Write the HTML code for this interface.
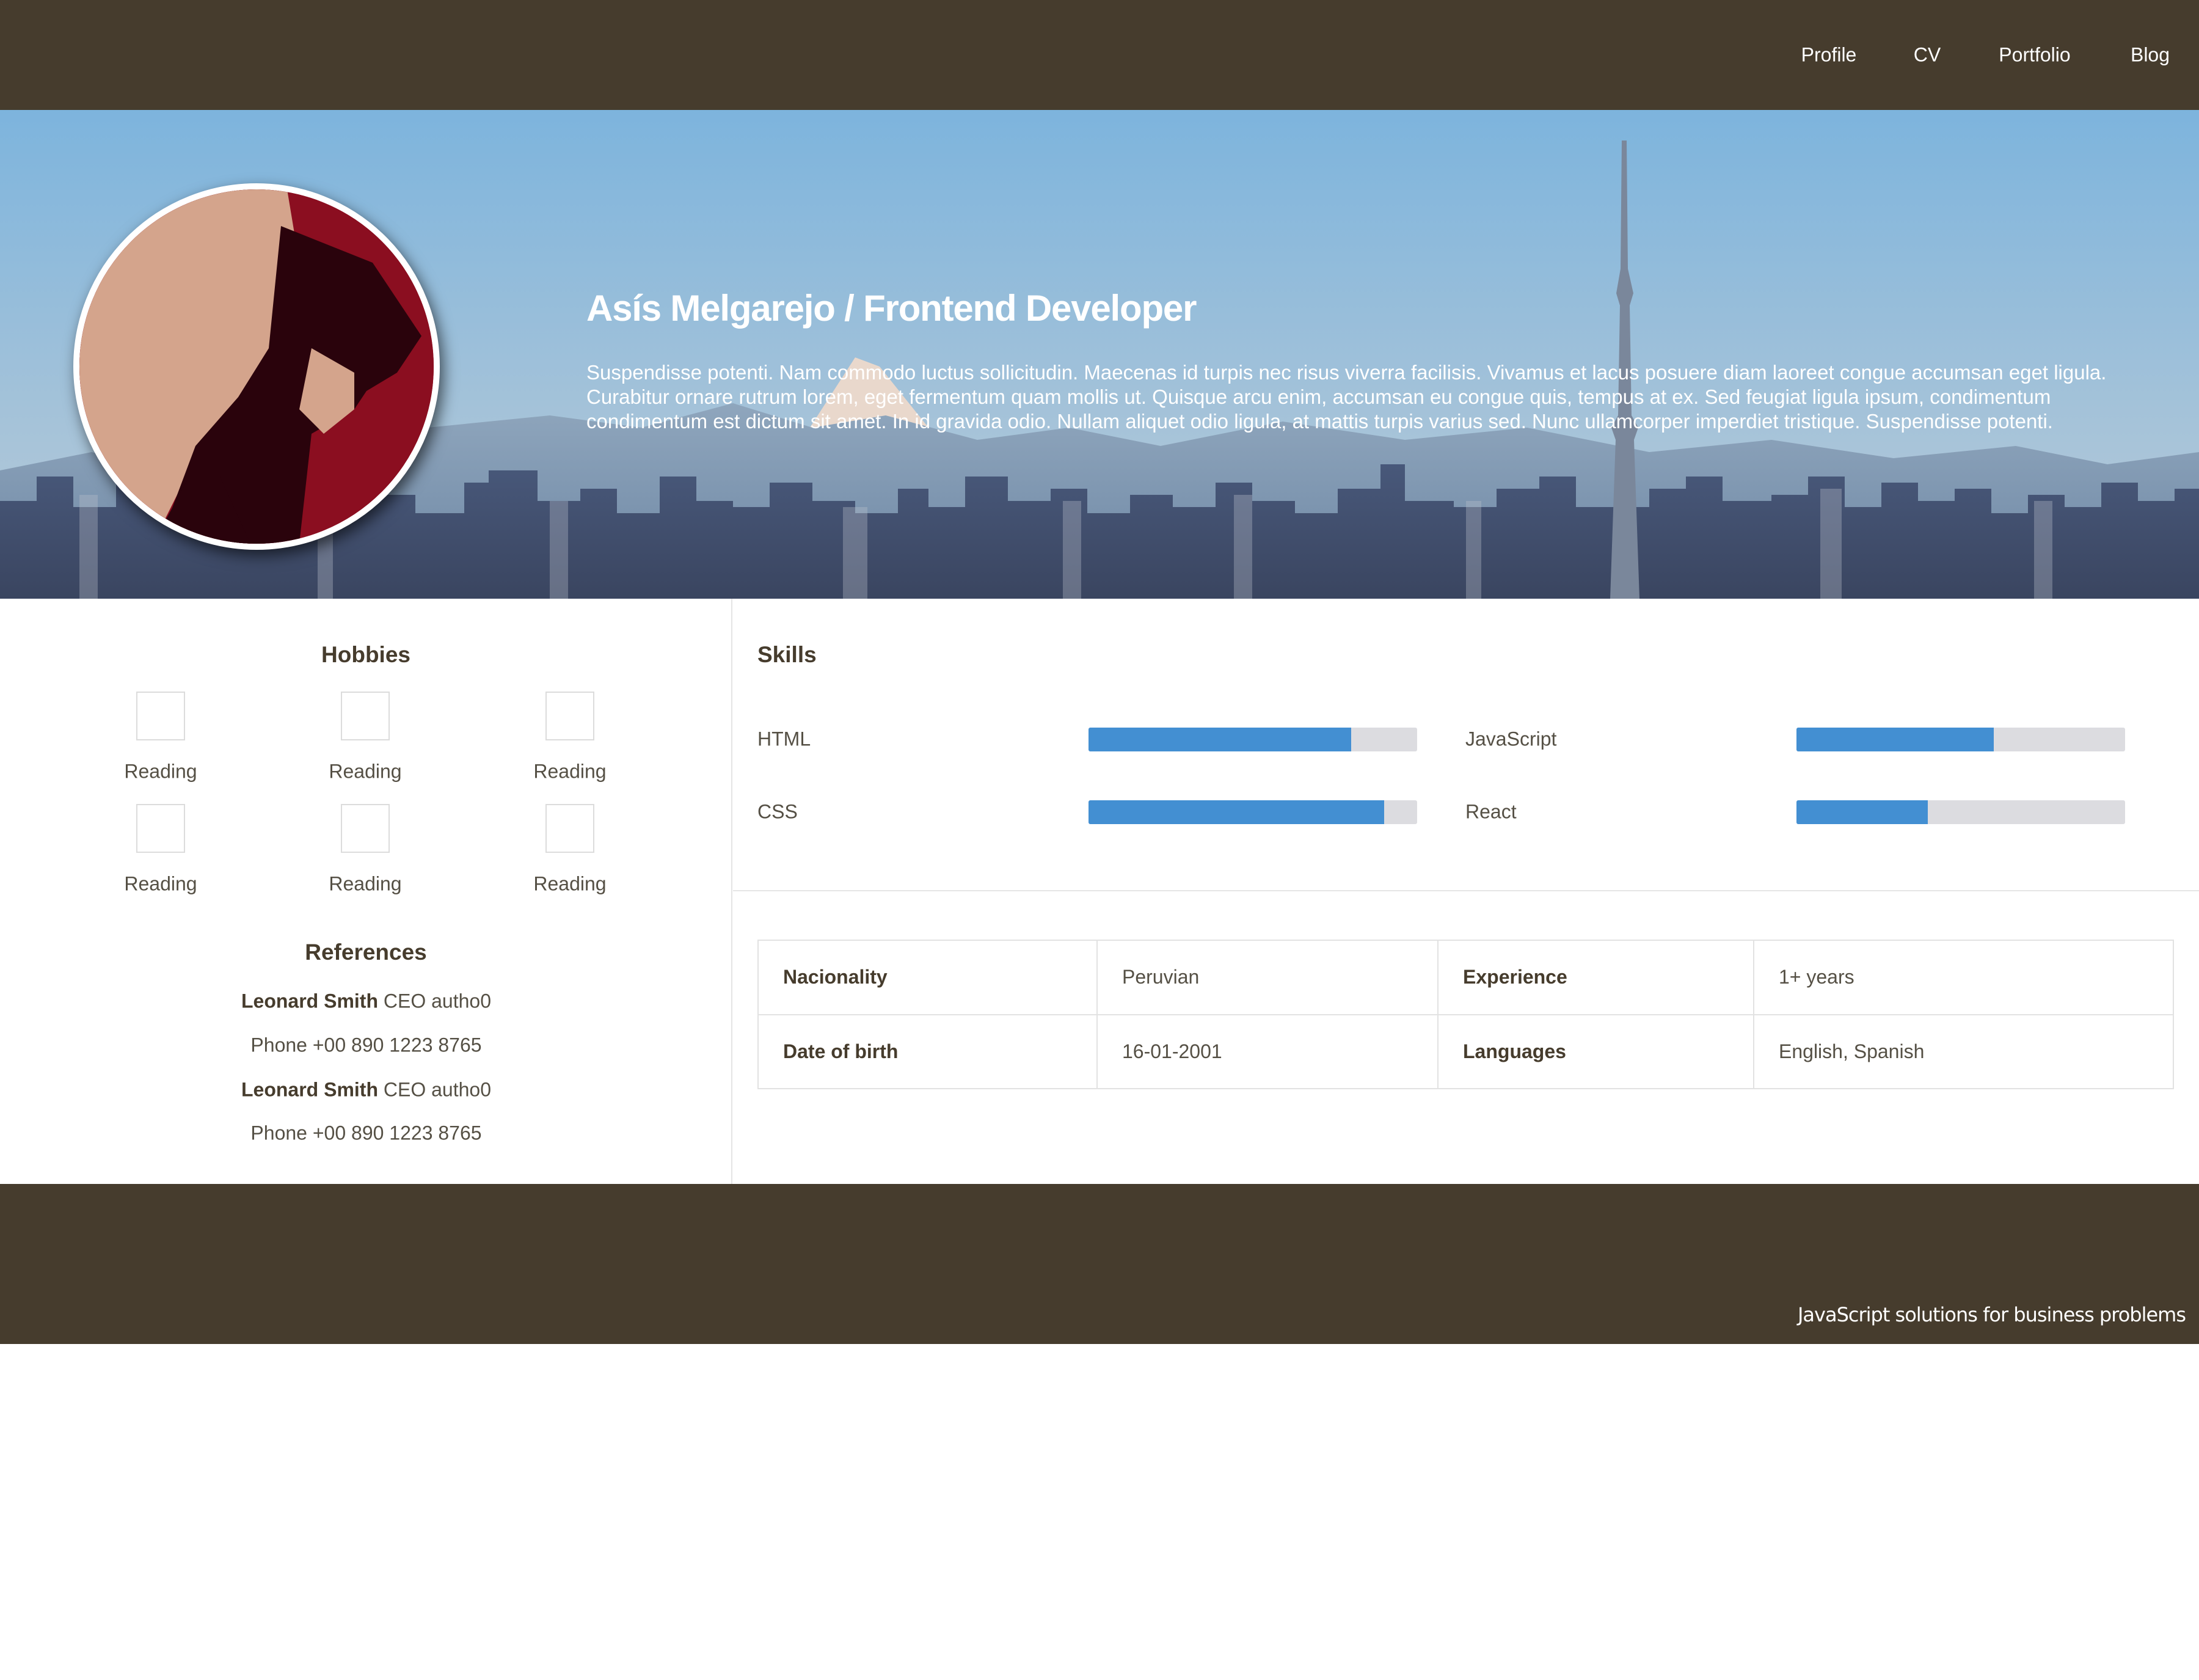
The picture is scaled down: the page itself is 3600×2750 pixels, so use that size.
<!DOCTYPE html>
<html><head><meta charset="utf-8"><style>
*{margin:0;padding:0;box-sizing:border-box}
html,body{width:3600px;height:2750px;background:#fff;overflow:hidden;font-family:"Liberation Sans",sans-serif;color:#463c2d}
.hdr{position:absolute;left:0;top:0;width:3600px;height:180px;background:#463c2d}
.nav{position:absolute;top:90px;transform:translate(-50%,-50%);color:#fff;font-size:32px;white-space:nowrap}
.hero{position:absolute;left:0;top:180px;width:3600px;height:800px;overflow:hidden}
.av{position:absolute;left:120px;top:120px;width:600px;height:600px;border-radius:50%;border:10px solid #fff;overflow:hidden;box-shadow:6px 10px 24px rgba(0,0,0,.6);background:#8b0e20}
h1{position:absolute;left:960px;top:290px;color:#fff;font-size:60px;font-weight:bold;letter-spacing:-1.2px}
.pp{position:absolute;left:960px;top:410px;width:2510px;color:#fff;font-size:33px;line-height:40px}
.left{position:absolute;left:0;top:980px;width:1199px;height:958px;border-right:2px solid #e5e5e5}
.h2{position:absolute;font-size:37px;font-weight:bold;transform:translate(-50%,-50%);white-space:nowrap}
.box{position:absolute;width:80px;height:80px;border:2px solid #dcdcdc}
.lab{position:absolute;font-size:32px;transform:translate(-50%,-50%);white-space:nowrap;color:#555045}
.ref{position:absolute;left:0;width:1199px;text-align:center;font-size:32px;transform:translateY(-50%);color:#555045}
.ref b{color:#463c2d}
.sk{position:absolute;font-size:32px;transform:translateY(-50%);color:#555045}
.bar{position:absolute;width:538px;height:39px;background:#dcdce0;border-radius:3px;overflow:hidden}
.bar i{display:block;height:100%;background:#438fd2}
.div{position:absolute;left:1200px;top:1457px;width:2400px;height:2px;background:#e5e5e5}
table{position:absolute;left:1240px;top:1538px;width:2319px;height:245px;border-collapse:collapse}
td{border:2px solid #e2e2e2;padding-left:40px;font-size:32px;color:#555045;vertical-align:middle}
td b{color:#463c2d}
.ftr{position:absolute;left:0;top:1938px;width:3600px;height:262px;background:#463c2d}
.tag{position:absolute;right:22px;top:2133px;color:#fff;font-size:32px;font-family:"Comic Sans MS","DejaVu Sans",cursive;letter-spacing:-1px}
</style></head><body>
<div class="hdr"></div>
<div class="nav" style="left:2994px">Profile</div>
<div class="nav" style="left:3155px">CV</div>
<div class="nav" style="left:3331px">Portfolio</div>
<div class="nav" style="left:3520px">Blog</div>

<div class="hero">
<svg width="3600" height="800" viewBox="0 0 3600 800">
<defs>
<linearGradient id="sky" x1="0" y1="0" x2="0" y2="1"><stop offset="0" stop-color="#7db4dd"/><stop offset="0.6" stop-color="#a3c2d9"/><stop offset="1" stop-color="#b9cbd8"/></linearGradient>
<linearGradient id="mt" x1="0" y1="0" x2="0" y2="1"><stop offset="0" stop-color="#8fa6bd"/><stop offset="1" stop-color="#6d86a3"/></linearGradient>
<linearGradient id="ct" x1="0" y1="0" x2="0" y2="1"><stop offset="0" stop-color="#48587a"/><stop offset="1" stop-color="#3a4560"/></linearGradient>
</defs>
<rect width="3600" height="800" fill="url(#sky)"/>
<path d="M1300 560 L1400 405 L1440 420 L1520 520 L1580 560Z" fill="#e9d8cc"/>
<path d="M0 590 L150 560 L300 600 L500 540 L700 520 L900 500 L1050 520 L1200 480 L1330 520 L1450 500 L1600 540 L1750 520 L1900 550 L2100 510 L2300 540 L2500 520 L2700 560 L2900 540 L3100 570 L3300 550 L3450 580 L3600 560 L3600 800 L0 800Z" fill="url(#mt)"/>
<path d="M0 640 H60 V600 H120 V650 H190 V610 H240 V580 H280 V630 H340 V660 H410 V615 H470 V640 H540 V600 H600 V630 H680 V660 H760 V610 H800 V590 H880 V640 H950 V620 H1010 V660 H1080 V600 H1140 V640 H1200 V650 H1260 V610 H1330 V640 H1400 V660 H1470 V620 H1520 V650 H1580 V600 H1650 V640 H1720 V620 H1780 V660 H1850 V630 H1920 V650 H1990 V610 H2050 V640 H2120 V660 H2190 V620 H2260 V580 H2300 V640 H2380 V650 H2450 V620 H2520 V600 H2580 V650 H2700 V620 H2760 V600 H2820 V640 H2900 V630 H2960 V600 H3020 V650 H3080 V610 H3140 V640 H3200 V620 H3260 V660 H3320 V630 H3380 V650 H3440 V610 H3500 V640 H3560 V620 H3600 V800 H0Z" fill="url(#ct)"/>
<g fill="#b9c0cc" opacity=".35">
<rect x="130" y="630" width="30" height="170"/><rect x="520" y="620" width="25" height="180"/><rect x="900" y="640" width="30" height="160"/><rect x="1380" y="650" width="40" height="150"/><rect x="1740" y="640" width="30" height="160"/><rect x="2020" y="630" width="30" height="170"/><rect x="2400" y="640" width="25" height="160"/><rect x="2980" y="620" width="35" height="180"/><rect x="3330" y="640" width="30" height="160"/>
</g>
<path d="M2655 50 L2663 50 L2665 260 L2674 300 L2668 320 L2671 500 L2682 520 L2675 540 L2684 800 L2636 800 L2645 540 L2638 520 L2649 500 L2652 320 L2646 300 L2653 260Z" fill="#7a879b"/>
</svg>
<div class="av">
<svg width="580" height="580" viewBox="0 0 580 580">
<rect width="580" height="580" fill="#8b0e20"/>
<path d="M0 0 L340 0 L360 120 L330 300 L270 360 L200 420 L120 580 L0 580Z" fill="#d4a48c"/>
<path d="M330 60 L480 120 L560 240 L520 300 L470 330 L450 360 L380 400 L360 580 L130 580 L190 420 L260 340 L310 260Z" fill="#2a030c"/>
<path d="M380 260 L450 300 L450 360 L400 400 L360 360Z" fill="#d4a48c"/>
<path d="M120 580 L180 470 L230 470 L280 580Z" fill="#2a030c"/>
</svg>
</div>
<h1>Asís Melgarejo / Frontend Developer</h1>
<div class="pp">Suspendisse potenti. Nam commodo luctus sollicitudin. Maecenas id turpis nec risus viverra facilisis. Vivamus et lacus posuere diam laoreet congue accumsan eget ligula. Curabitur ornare rutrum lorem, eget fermentum quam mollis ut. Quisque arcu enim, accumsan eu congue quis, tempus at ex. Sed feugiat ligula ipsum, condimentum condimentum est dictum sit amet. In id gravida odio. Nullam aliquet odio ligula, at mattis turpis varius sed. Nunc ullamcorper imperdiet tristique. Suspendisse potenti.</div>
</div>

<div class="left"></div>
<div class="h2" style="left:599px;top:1072px">Hobbies</div>
<div class="box" style="left:223px;top:1132px"></div><div class="box" style="left:558px;top:1132px"></div><div class="box" style="left:893px;top:1132px"></div>
<div class="lab" style="left:263px;top:1263px">Reading</div><div class="lab" style="left:598px;top:1263px">Reading</div><div class="lab" style="left:933px;top:1263px">Reading</div>
<div class="box" style="left:223px;top:1316px"></div><div class="box" style="left:558px;top:1316px"></div><div class="box" style="left:893px;top:1316px"></div>
<div class="lab" style="left:263px;top:1447px">Reading</div><div class="lab" style="left:598px;top:1447px">Reading</div><div class="lab" style="left:933px;top:1447px">Reading</div>
<div class="h2" style="left:599px;top:1559px">References</div>
<div class="ref" style="top:1639px"><b>Leonard Smith</b> CEO autho0</div>
<div class="ref" style="top:1711px">Phone +00 890 1223 8765</div>
<div class="ref" style="top:1784px"><b>Leonard Smith</b> CEO autho0</div>
<div class="ref" style="top:1855px">Phone +00 890 1223 8765</div>

<div class="h2" style="left:1240px;top:1072px;transform:translateY(-50%)">Skills</div>
<div class="sk" style="left:1240px;top:1210px">HTML</div>
<div class="bar" style="left:1782px;top:1191px"><i style="width:80%"></i></div>
<div class="sk" style="left:2399px;top:1210px">JavaScript</div>
<div class="bar" style="left:2941px;top:1191px"><i style="width:60%"></i></div>
<div class="sk" style="left:1240px;top:1329px">CSS</div>
<div class="bar" style="left:1782px;top:1310px"><i style="width:90%"></i></div>
<div class="sk" style="left:2399px;top:1329px">React</div>
<div class="bar" style="left:2941px;top:1310px"><i style="width:40%"></i></div>
<div class="div"></div>
<table>
<tr><td style="width:555px"><b>Nacionality</b></td><td style="width:558px">Peruvian</td><td style="width:517px"><b>Experience</b></td><td>1+ years</td></tr>
<tr><td><b>Date of birth</b></td><td>16-01-2001</td><td><b>Languages</b></td><td>English, Spanish</td></tr>
</table>

<div class="ftr"></div>
<div class="tag">JavaScript solutions for business problems</div>
</body></html>
